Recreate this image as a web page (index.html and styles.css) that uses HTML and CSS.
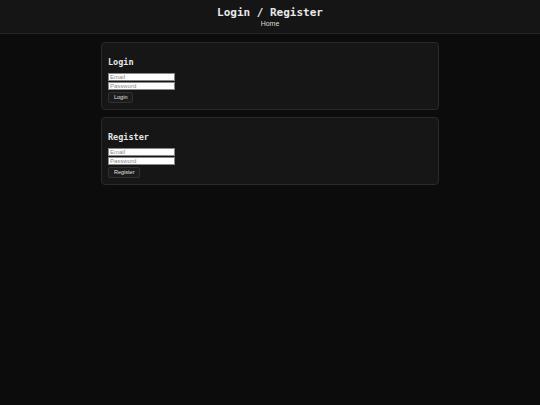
FILE: index.html
```html
<!DOCTYPE html>
<html>
<head>
<meta charset="utf-8">
<link rel="stylesheet" href="styles.css">
</head>
<body>
<header class="top">
  <h1 class="title">Login / Register</h1>
  <a class="home" href="#">Home</a>
</header>
<main class="main">
  <section class="card">
    <h2 class="card-title">Login</h2>
    <form class="form">
      <input class="field" type="text" placeholder="Email">
      <input class="field" type="password" placeholder="Password">
      <button class="btn" type="button">Login</button>
    </form>
  </section>
  <section class="card">
    <h2 class="card-title">Register</h2>
    <form class="form">
      <input class="field" type="text" placeholder="Email">
      <input class="field" type="password" placeholder="Password">
      <button class="btn" type="button">Register</button>
    </form>
  </section>
</main>
</body>
</html>
```
FILE: styles.css
```css
* { box-sizing: border-box; }
html, body { margin: 0; padding: 0; }
body {
  background: #0c0c0c;
  color: #e6e6e6;
  font-family: "Liberation Sans", Arial, sans-serif;
  min-height: 405px;
}
.top {
  background: #151515;
  border-bottom: 1px solid #262626;
  height: 34px;
  display: flex;
  flex-direction: column;
  align-items: center;
  padding-top: 6px;
}
.title {
  margin: 0;
  font-family: "DejaVu Sans Mono", monospace;
  font-weight: bold;
  font-size: 11px;
  line-height: 13px;
  color: #e8e8e8;
}
.home {
  font-size: 7px;
  line-height: 9px;
  color: #d8d8d8;
  text-decoration: none;
}
.main {
  width: 338px;
  margin: 8px auto 0;
  display: flex;
  flex-direction: column;
  gap: 7px;
}
.card {
  background: #161616;
  border: 1px solid #2a2a2a;
  border-radius: 4px;
  padding: 7px 7px 6px 6px;
}
.card-title {
  margin: 7px 0 6px;
  font-family: "DejaVu Sans Mono", monospace;
  font-weight: bold;
  font-size: 8.5px;
  line-height: 10px;
  color: #e6e6e6;
}
.form {
  display: flex;
  flex-direction: column;
  align-items: flex-start;
  gap: 1px;
}
.field {
  width: 67px;
  height: 8px;
  padding: 0 1px;
  margin: 0;
  border: 1px solid #888;
  background: #fff;
  font-family: "Liberation Sans", Arial, sans-serif;
  font-size: 6px;
  color: #333;
  outline: none;
}
.field::placeholder { color: #8a8a8a; }
.btn {
  margin-top: 1px;
  height: 11px;
  padding: 0 5px;
  background: #1c1c1c;
  border: 1px solid #303030;
  border-radius: 2px;
  color: #e0e0e0;
  font-family: "Liberation Sans", Arial, sans-serif;
  font-size: 5.5px;
  line-height: 9px;
}
```
